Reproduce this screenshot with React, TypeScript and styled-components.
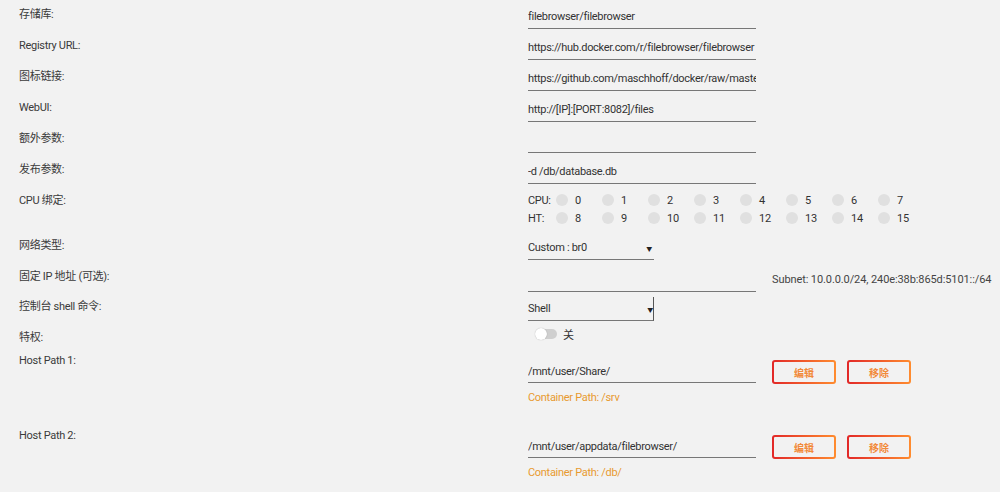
import * as React from 'react';
import styled, { createGlobalStyle } from 'styled-components';

const GlobalStyle = createGlobalStyle`
  body {
    margin: 0;
    background: #f2f2f2;
    font-family: Roboto, "Noto Sans CJK SC", sans-serif;
    font-size: 11px;
    letter-spacing: -0.3px;
    color: #333;
  }
`;

const Page = styled.div`
  padding-left: 19px;
  width: 981px;
`;

const Row = styled.div<{ $height: number }>`
  display: grid;
  grid-template-columns: 509px 1fr;
  box-sizing: border-box;
  height: ${props => props.$height}px;
  padding-top: 5px;
`;

const Label = styled.div`
  padding-top: 2px;
  line-height: 16px;
  color: #3a3a3a;
`;

const Value = styled.div<{ $offset?: number }>`
  display: flex;
  flex-direction: column;
  margin-top: ${props => props.$offset || 0}px;
`;

const Line = styled.div`
  display: flex;
  align-items: center;
  gap: 16px;
`;

const Field = styled.div<{ $width?: number; $lift?: number }>`
  box-sizing: border-box;
  width: ${props => props.$width || 228}px;
  height: 24px;
  padding-bottom: ${props => (props.$lift === undefined ? 3 : props.$lift)}px;
  border-bottom: 1px solid #777;
  display: flex;
  align-items: flex-end;
  line-height: 16px;
  white-space: nowrap;
  overflow: hidden;
  color: #333;
`;

const Select = styled(Field)<{ $boxed?: boolean }>`
  width: 126px;
  justify-content: space-between;
  padding-right: ${props => (props.$boxed ? 0 : 2)}px;
  border-right: ${props => (props.$boxed ? '1px solid #555' : 'none')};
  overflow: visible;
`;

const Arrow = styled.span`
  font-size: 6px;
  line-height: 15px;
  color: #222;
`;

const Note = styled.span`
  color: #444;
  letter-spacing: -0.1px;
  white-space: nowrap;
`;

const CpuLine = styled.div`
  display: flex;
  align-items: center;
  height: 18px;
`;

const CpuTag = styled.span`
  width: 28px;
`;

const CpuItem = styled.span`
  display: flex;
  align-items: center;
  width: 46px;
  gap: 7px;
`;

const Dot = styled.span`
  width: 12px;
  height: 12px;
  border-radius: 50%;
  background: #e0e0e0;
`;

const SwitchLine = styled.div`
  display: flex;
  align-items: center;
  gap: 6px;
  padding-left: 8px;
  height: 12px;
`;

const Track = styled.span`
  position: relative;
  width: 21px;
  height: 10px;
  border-radius: 5px;
  background: #cfcfcf;
`;

const Knob = styled.span`
  position: absolute;
  left: -1px;
  top: -1px;
  width: 12px;
  height: 12px;
  border-radius: 50%;
  background: #fff;
  box-shadow: 0 0 1px rgba(0, 0, 0, 0.35);
`;

const Buttons = styled.div`
  display: flex;
  gap: 11px;
  align-self: flex-end;
  margin-bottom: -1px;
`;

const Button = styled.button`
  box-sizing: border-box;
  width: 64px;
  height: 24px;
  border: 2px solid transparent;
  border-radius: 3px;
  background:
    linear-gradient(#f2f2f2, #f2f2f2) padding-box,
    linear-gradient(90deg, #e22828, #ff8c2f) border-box;
  font-family: Roboto, "Noto Sans CJK SC", sans-serif;
  font-size: 10px;
  font-weight: bold;
  color: #f28a3a;
  padding: 0;
`;

const ContainerPath = styled.div`
  margin-top: 7px;
  line-height: 16px;
  color: #e89a30;
`;

const cpus = [0, 1, 2, 3, 4, 5, 6, 7];

const simpleRows = [
  ['存储库:', 'filebrowser/filebrowser'],
  ['Registry URL:', 'https://hub.docker.com/r/filebrowser/filebrowser'],
  ['图标链接:', 'https://github.com/maschhoff/docker/raw/master/filebrowser/filebrowser.png'],
  ['WebUI:', 'http://[IP]:[PORT:8082]/files'],
  ['额外参数:', ''],
  ['发布参数:', '-d /db/database.db'],
];

const hostPaths = [
  ['Host Path 1:', '/mnt/user/Share/', 'Container Path: /srv'],
  ['Host Path 2:', '/mnt/user/appdata/filebrowser/', 'Container Path: /db/'],
];

export default function App() {
  return (
    <Page>
      <GlobalStyle />
      {simpleRows.map(([label, value]) => (
        <Row $height={31} key={label}>
          <Label>{label}</Label>
          <Field>{value}</Field>
        </Row>
      ))}
      <Row $height={45}>
        <Label>CPU 绑定:</Label>
        <Value>
          {['CPU:', 'HT:'].map((tag, line) => (
            <CpuLine key={tag}>
              <CpuTag>{tag}</CpuTag>
              {cpus.map(n => (
                <CpuItem key={n}>
                  <Dot />
                  {n + line * 8}
                </CpuItem>
              ))}
            </CpuLine>
          ))}
        </Value>
      </Row>
      <Row $height={31}>
        <Label>网络类型:</Label>
        <Select>
          Custom : br0
          <Arrow>▼</Arrow>
        </Select>
      </Row>
      <Row $height={30}>
        <Label>固定 IP 地址 (可选):</Label>
        <Line>
          <Field />
          <Note>Subnet: 10.0.0.0/24, 240e:38b:865d:5101::/64</Note>
        </Line>
      </Row>
      <Row $height={31}>
        <Label>控制台 shell 命令:</Label>
        <Select $boxed>
          Shell
          <Arrow>▼</Arrow>
        </Select>
      </Row>
      <Row $height={23}>
        <Label>特权:</Label>
        <SwitchLine>
          <Track>
            <Knob />
          </Track>
          关
        </SwitchLine>
      </Row>
      {hostPaths.map(([label, host, target]) => (
        <Row $height={75} key={label}>
          <Label>{label}</Label>
          <Value $offset={8}>
            <Line>
              <Field $lift={2}>{host}</Field>
              <Buttons>
                <Button>编辑</Button>
                <Button>移除</Button>
              </Buttons>
            </Line>
            <ContainerPath>{target}</ContainerPath>
          </Value>
        </Row>
      ))}
    </Page>
  );
}
